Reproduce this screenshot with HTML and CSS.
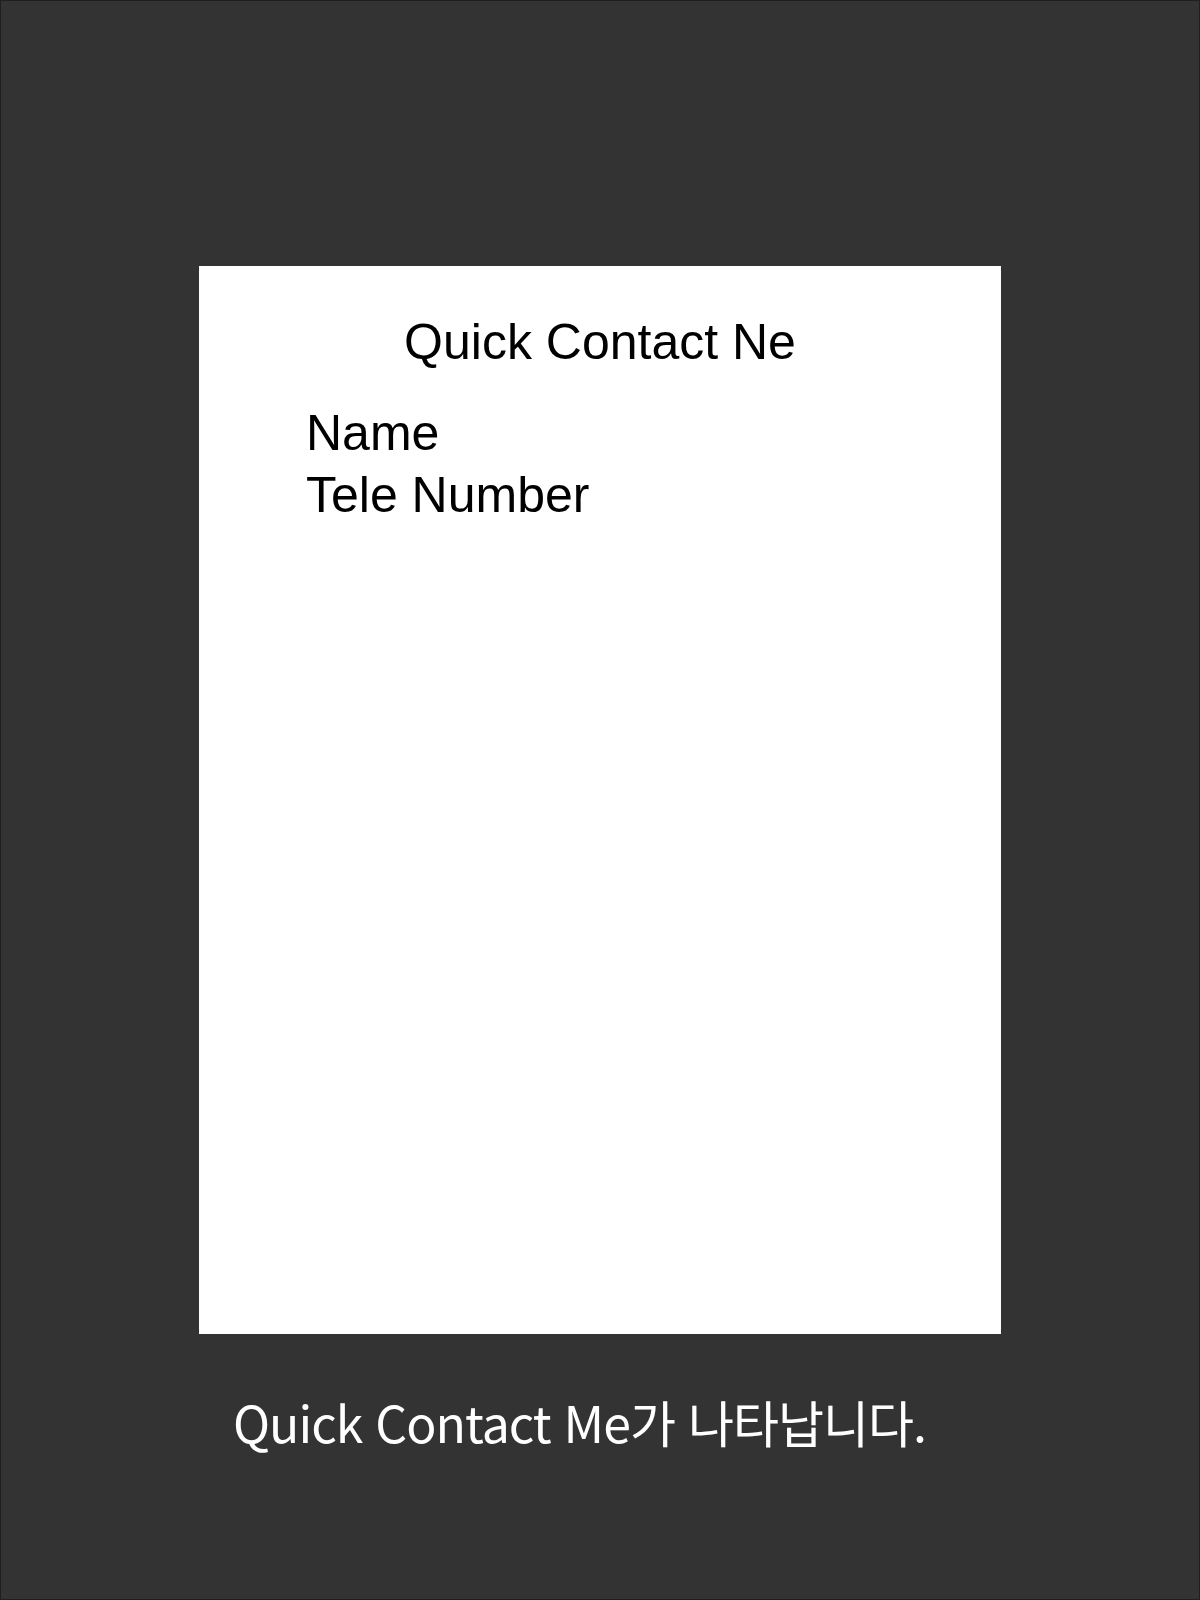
FILE: index.html
```html
<!DOCTYPE html>
<html lang="ko">
<head>
<meta charset="utf-8">
<title>Quick Contact</title>
<link rel="stylesheet" href="styles.css">
</head>
<body>
<div class="page">
  <div class="card">
    <h1 class="card-title">Quick Contact Ne</h1>
    <div class="fields">
      <div class="field">Name</div>
      <div class="field">Tele Number</div>
    </div>
  </div>
  <p class="caption">Quick Contact Me가 나타납니다.</p>
</div>
</body>
</html>
```

FILE: styles.css
```css
html, body {
  margin: 0;
  padding: 0;
  background: #333333;
}

.page {
  box-sizing: border-box;
  width: 1200px;
  height: 1600px;
  background: #333333;
  border: 1px solid #1f1f1f;
  padding-top: 265px;
  overflow: hidden;
}

.card {
  box-sizing: border-box;
  width: 802px;
  height: 1068px;
  margin-left: 198px;
  background: #ffffff;
  padding-top: 51px;
}

.card-title {
  margin: 0;
  font-family: "Liberation Sans", Arial, sans-serif;
  font-weight: normal;
  font-size: 50px;
  line-height: 50px;
  text-align: center;
  color: #000000;
}

.fields {
  margin-top: 35px;
  padding-left: 107px;
}

.field {
  font-family: "Liberation Sans", Arial, sans-serif;
  font-size: 50px;
  line-height: 62px;
  color: #000000;
}

.caption {
  margin: 57px 0 0 232px;
  font-family: "Noto Sans CJK KR", "Noto Sans", sans-serif;
  font-size: 50px;
  line-height: 60px;
  letter-spacing: -1px;
  color: #ffffff;
}
```
